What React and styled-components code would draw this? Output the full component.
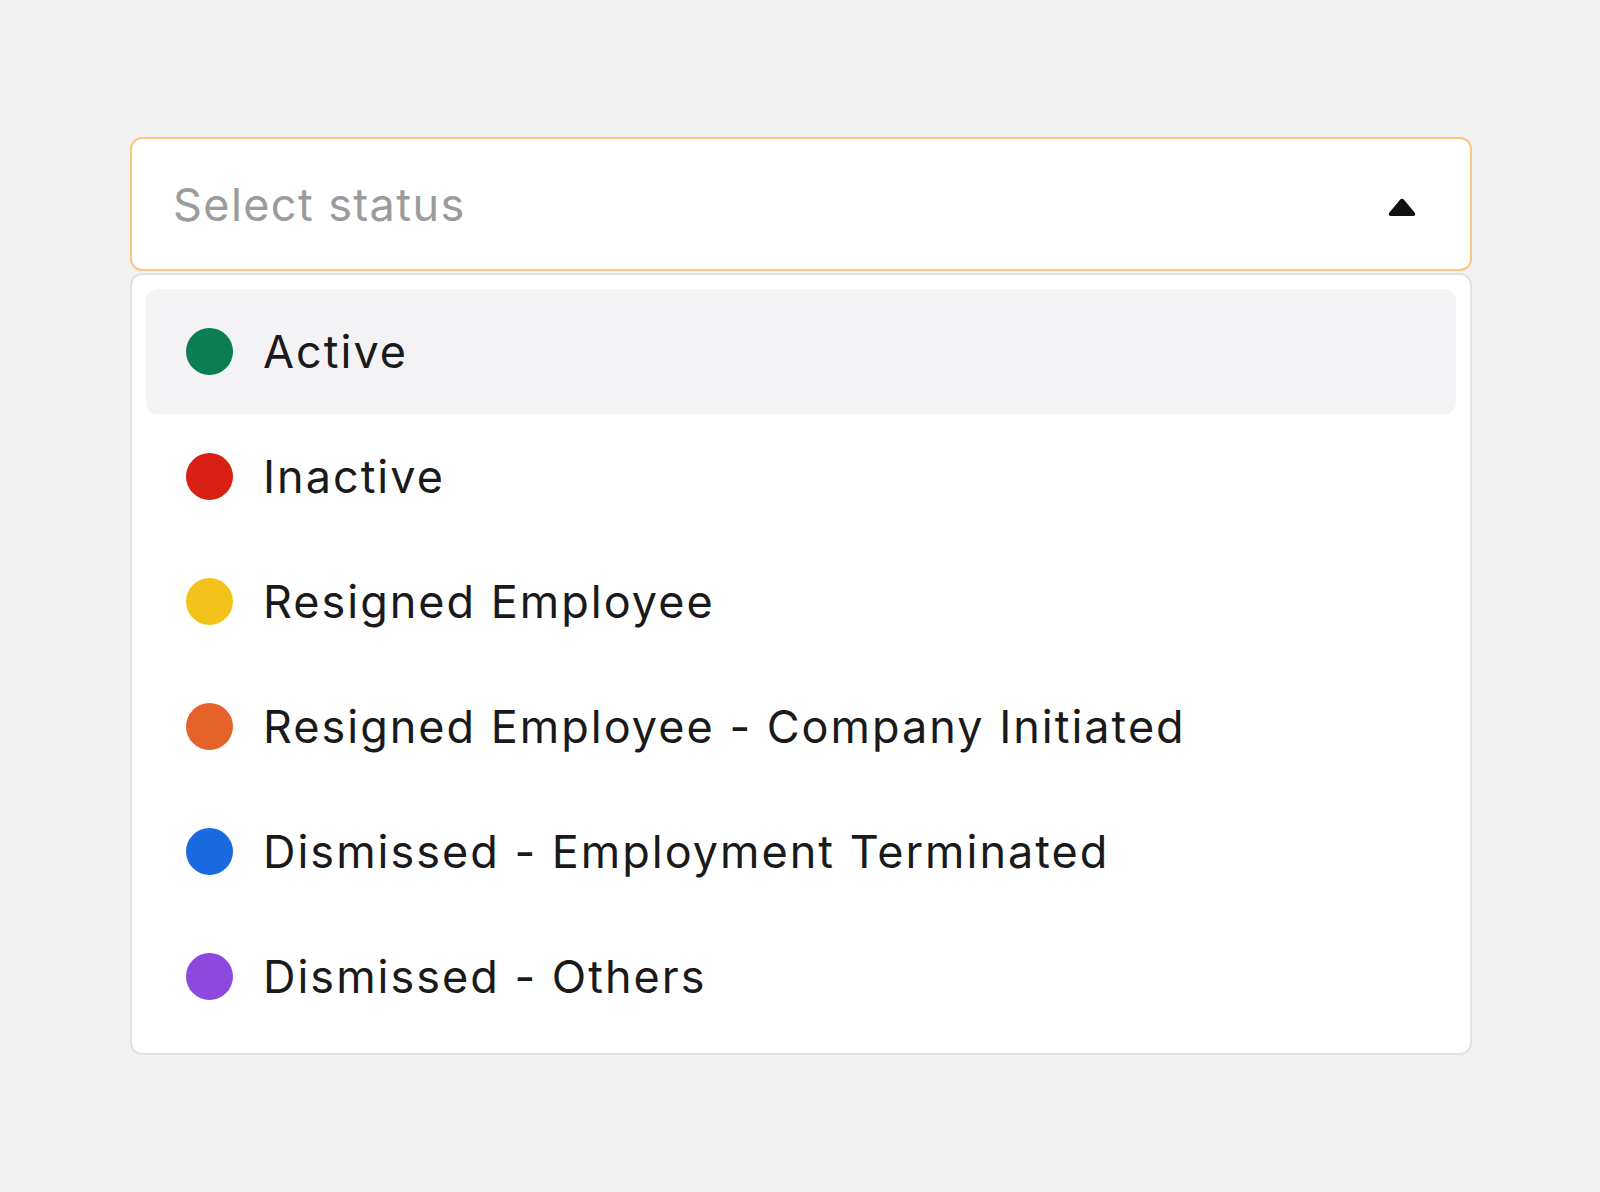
import styled, { createGlobalStyle } from "styled-components";

const GlobalStyle = createGlobalStyle`
  html, body {
    margin: 0;
    padding: 0;
    background: #f2f2f2;
  }
  body {
    font-family: Inter, "Noto Sans", sans-serif;
  }
`;

const statuses = [
  { label: "Active", color: "#0a7d52" },
  { label: "Inactive", color: "#d92014" },
  { label: "Resigned Employee", color: "#f3c31c" },
  { label: "Resigned Employee - Company Initiated", color: "#e5632a" },
  { label: "Dismissed - Employment Terminated", color: "#1a69e0" },
  { label: "Dismissed - Others", color: "#8d49de" },
];

const Page = styled.div`
  min-height: 1192px;
  padding: 137px 0 0 130px;
  box-sizing: border-box;
`;

const Wrapper = styled.div`
  width: 1342px;
  display: flex;
  flex-direction: column;
  gap: 2px;
`;

const Trigger = styled.button`
  display: flex;
  align-items: center;
  justify-content: space-between;
  height: 134px;
  padding: 0 54px 0 41px;
  box-sizing: border-box;
  background: #fff;
  border: 2px solid #f8c583;
  border-radius: 12px;
  font: inherit;
  cursor: pointer;

  svg {
    margin-top: 7px;
  }
`;

const Placeholder = styled.span`
  font-size: 45px;
  color: #9b9b9b;
  letter-spacing: 1.4px;
`;

const Menu = styled.ul`
  list-style: none;
  margin: 0;
  padding: 14px;
  background: #fff;
  border: 2px solid #e2e2e6;
  border-radius: 12px;
`;

const Option = styled.li`
  display: flex;
  align-items: center;
  gap: 30px;
  height: 125px;
  padding: 0 40px;
  border-radius: 12px;
  background: ${(p) => (p.$highlighted ? "#f3f3f5" : "transparent")};
  font-size: 45px;
  letter-spacing: 2px;
  color: #1a1a1a;
  cursor: pointer;
`;

const Dot = styled.span`
  width: 47px;
  height: 47px;
  border-radius: 50%;
  background: ${(p) => p.$color};
  flex-shrink: 0;
`;

const Caret = () => (
  <svg width="28" height="19" viewBox="0 0 28 19">
    <path
      d="M11.6 2.2 Q14 -0.6 16.4 2.2 L26.6 14.6 Q28.4 18 24.6 18 L3.4 18 Q-0.4 18 1.4 14.6 Z"
      fill="#111"
    />
  </svg>
);

export default function App() {
  return (
    <Page>
      <GlobalStyle />
      <Wrapper>
        <Trigger type="button">
          <Placeholder>Select status</Placeholder>
          <Caret />
        </Trigger>
        <Menu>
          {statuses.map((s, i) => (
            <Option key={s.label} $highlighted={i === 0}>
              <Dot $color={s.color} />
              {s.label}
            </Option>
          ))}
        </Menu>
      </Wrapper>
    </Page>
  );
}
